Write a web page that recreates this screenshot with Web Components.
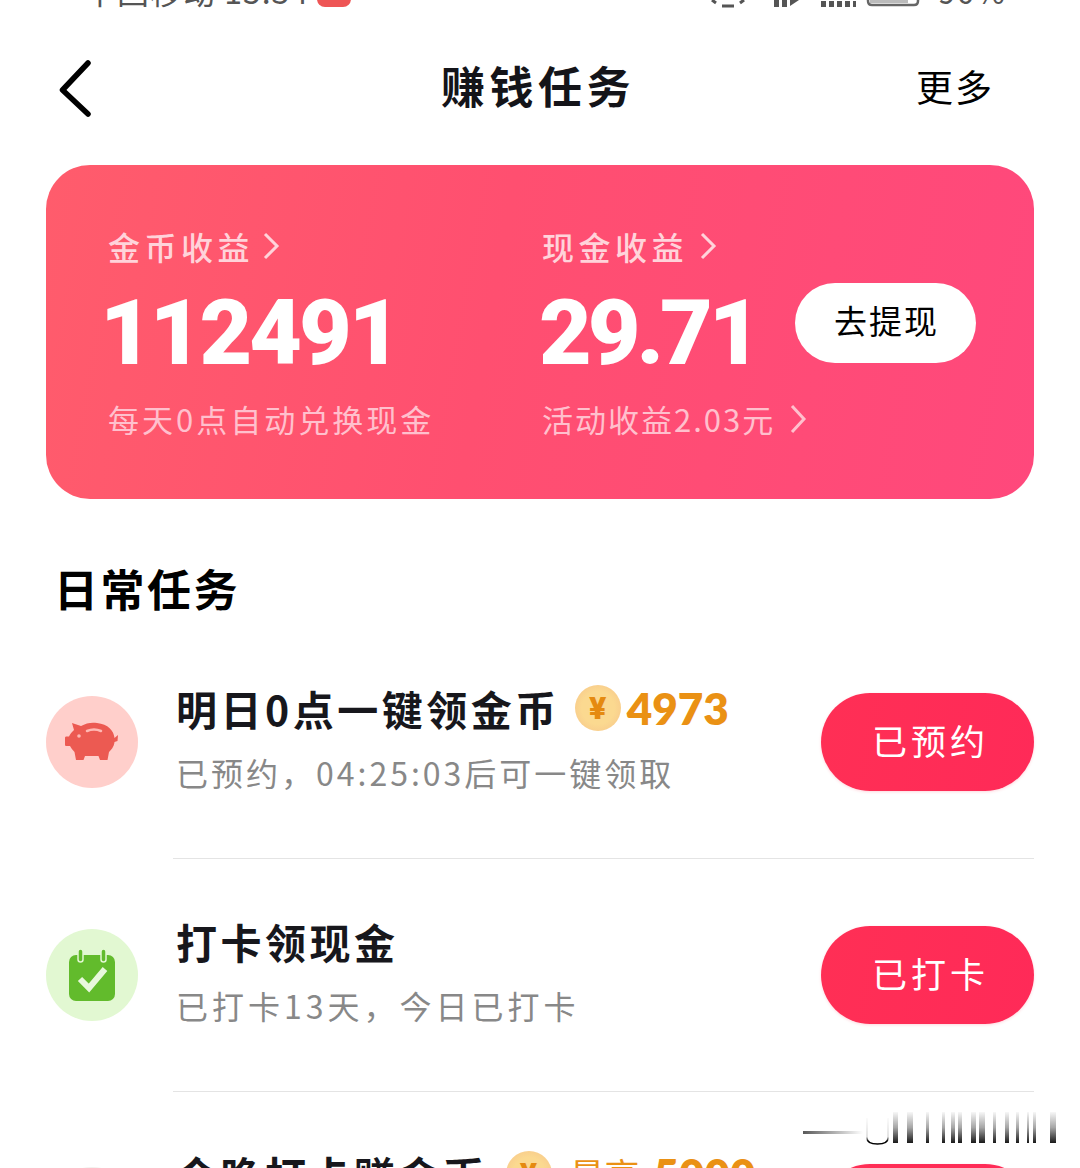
<!DOCTYPE html>
<html><head><meta charset="utf-8">
<style>
html,body{margin:0;padding:0;background:#fff}
body{width:1080px;height:1168px;overflow:hidden;position:relative;font-family:"Noto Sans CJK SC","Noto Sans",sans-serif}
</style></head><body>
<earn-page></earn-page>
<script>
const CJK='"Noto Sans CJK SC","Noto Sans",sans-serif';
class Base extends HTMLElement{
  constructor(){super();this.attachShadow({mode:'open'}).innerHTML=this.markup();}
}
class StatusBar extends Base{markup(){return `<style>
:host{display:flex;justify-content:space-between;height:8px;overflow:hidden;padding:0 74px 0 84px;color:#555;font:400 32px/1 ${CJK};letter-spacing:1px}
.row{display:flex;height:8px}
.t{display:block;margin-top:-26px;white-space:nowrap}
.badge{width:34px;height:30px;background:#ee5555;border-radius:8px;margin:-23px 0 0 8px}
svg{display:block}
</style><div class="row"><span class="t">中国移动 15:34</span><span class="badge"></span></div>
<div class="row"><svg width="210" height="8" viewBox="0 0 210 8" fill="#555"><path d="M2 0 L6 3 M12 6H24 M30 3 L34 0" stroke="#555" stroke-width="3" fill="none"/><rect x="64" y="0" width="5" height="7"/><rect x="72" y="0" width="5" height="7"/><path d="M80 6 L89 0H80Z"/><rect x="111" y="1" width="5" height="6"/><rect x="119" y="1" width="5" height="6"/><rect x="127" y="1" width="5" height="6"/><rect x="135" y="1" width="5" height="6"/><rect x="143" y="1" width="3" height="6"/><path d="M158 -8V1Q158 5 162 5H204Q208 5 208 1V-8" fill="none" stroke="#666" stroke-width="2.500"/><rect x="160" y="0" width="38" height="3" fill="#bbb"/></svg><span class="t" style="margin-left:18px">90%</span></div>`}}
class NavBar extends Base{markup(){return `<style>
:host{display:grid;grid-template-columns:1fr auto 1fr;align-items:center;height:157px;padding:0 62px 0 58px;color:#141419;font-family:${CJK}}
svg{display:block;margin-top:3px}
h1{margin:0 0 4px;font:700 44px/1 ${CJK};letter-spacing:4.500px}
.more{justify-self:end;margin-right:24px;font:400 37px/1 ${CJK};letter-spacing:2px;color:#000}
</style><svg width="36" height="58" viewBox="0 0 36 58"><path d="M30 4 L4.500 31 L30 55" fill="none" stroke="#000" stroke-width="5.500" stroke-linecap="round" stroke-linejoin="round"/></svg>
<h1>赚钱任务</h1><span class="more">更多</span>`}}
class IncomeCol extends Base{markup(){return `<style>
:host{display:block}
.label{display:flex;align-items:center;gap:var(--arrow-gap,8px);margin-top:-1px;font:500 32px/38px ${CJK};letter-spacing:4.500px;color:#ffd3da}
.num{display:flex;align-items:center;gap:var(--pill-gap,38px);margin-top:30px;height:76px}
.value{font:900 91px/76px Roboto,sans-serif;color:#fff;letter-spacing:var(--val-ls,-3px);margin-left:var(--val-x,-8px)}
.sub{display:flex;align-items:center;gap:14px;margin-top:29px;font:400 31px/38px ${CJK};letter-spacing:var(--sub-ls,3px);color:#ffc0cd}
</style><div class="label">${this.getAttribute('label')}<svg width="18" height="28" viewBox="0 0 18 28"><path d="M3 2 15 14 3 26" fill="none" stroke="#ffd3da" stroke-width="3"/></svg></div>
<div class="num"><span class="value">${this.getAttribute('value')}</span><slot></slot></div>
<div class="sub">${this.getAttribute('sub')}${this.hasAttribute('arrow')?'<svg width="18" height="30" viewBox="0 0 18 30"><path d="M3 2 15 15 3 28" fill="none" stroke="#ffc0cd" stroke-width="3"/></svg>':''}</div>`}}
class IncomeCard extends Base{markup(){return `<style>
:host{display:grid;grid-template-columns:434px 1fr;margin:0 46px;height:334px;box-sizing:border-box;padding:63px 58px 0 62px;border-radius:44px;background:linear-gradient(100deg,#ff5c6c 0%,#ff4f70 45%,#ff487c 100%)}
</style><slot></slot>`}}
class PillBtn extends Base{markup(){return `<style>
:host{display:flex;align-items:center;justify-content:center;width:181px;height:80px;margin-top:-20px;padding:0 0 5px 3px;box-sizing:border-box;border-radius:40px;background:#fff;color:#000;font:400 33px/1 ${CJK};letter-spacing:2px}
</style><slot></slot>`}}
class SectionTitle extends Base{markup(){return `<style>
:host{display:block;margin:64px 0 0 54px;font:700 44px/50px ${CJK};letter-spacing:2.500px;color:#000}
</style><slot></slot>`}}
class TaskRow extends Base{markup(){return `<style>
:host{display:grid;grid-template-columns:92px 1fr 213px;align-items:center;column-gap:38px;margin-left:46px;width:988px;height:233px;position:relative}
.icon{width:92px;height:92px;margin-top:var(--side-y,-2px);border-radius:50%;display:flex;align-items:center;justify-content:center;background:var(--ic)}
.text{padding-bottom:10px}
.title{display:flex;align-items:center;font:700 41px/46px ${CJK};letter-spacing:3.500px;color:#17171c;white-space:nowrap}
.sub{margin-top:22px;min-height:38px;font:400 32px/38px ${CJK};letter-spacing:var(--ls,3px);color:#888;white-space:nowrap}
.btn{height:98px;box-sizing:border-box;padding:0 0 5px 6px;margin-top:var(--side-y,-2px);border-radius:49px;display:flex;align-items:center;justify-content:center;background:linear-gradient(100deg,#ff2f55,#ff2a58);color:#fff;font:400 35px/1 ${CJK};letter-spacing:4px;box-shadow:0 1px 3px rgba(255,60,90,.2)}
.line{position:absolute;left:127px;right:0;bottom:0;height:1px;background:#e4e4e4}
</style><div class="icon"><slot name="icon"></slot></div>
<div class="text"><div class="title">${this.getAttribute('heading')}<slot name="reward"></slot></div><div class="sub">${this.getAttribute('sub')||''}</div></div>
<div class="btn">${this.getAttribute('btn')}</div><div class="line"></div>`}}
class CoinReward extends Base{markup(){const p=this.getAttribute('prefix');return `<style>
:host{display:inline-flex;align-items:center;gap:6px;margin-left:15px}
b{font:800 44px/46px Lato,Roboto,sans-serif;color:#ea9114;letter-spacing:0}
i{font:400 35px/46px ${CJK};color:#ea9114;margin:0 8px 0 12px;letter-spacing:0}
.coin{width:46px;height:46px;border-radius:50%;background:radial-gradient(circle at 50% 50%,#fbd990 0 50%,#f9cf8d 72%,#f3bd72 100%);color:#e58a10;font:900 32px/46px Roboto,sans-serif;text-align:center;letter-spacing:0}
</style><span class="coin">¥</span>${p?`<i>${p}</i>`:''}<b>${this.getAttribute('n')}</b>`}}
class EarnPage extends Base{markup(){return `<style>
:host{display:block;width:1080px;height:1168px;overflow:hidden;position:relative}
svg{display:block}
.wm{position:absolute;left:800px;top:1110px}
.gap{height:13px}
</style>
<status-bar></status-bar><nav-bar></nav-bar>
<income-card>
 <income-col label="金币收益" value="112491" sub="每天0点自动兑换现金"></income-col>
 <income-col label="现金收益" value="29.71" sub="活动收益2.03元" arrow style="--val-x:-3px;--val-ls:-4px;--pill-gap:37px;--sub-ls:2px;--arrow-gap:11px"><pill-btn>去提现</pill-btn></income-col>
</income-card>
<section-title>日常任务</section-title>
<div class="gap"></div>
<task-row heading="明日0点一键领金币" sub="已预约，04:25:03后可一键领取" btn="已预约" style="--ic:#ffcfcb">
 <svg slot="icon" width="54" height="40" viewBox="0 0 54 40"><path d="M9 8 L7 1 L16 4 C21 1 27 0 32 1 C43 2 49 9 49.500 16 L53 13 L52.500 19 L49.500 20 C49 25 46 28 44 30 L42.500 38 H35 L33.500 34 H20 L18.500 38 H11 L9.500 30 C7.500 28 6 26 5 24 H1.500 C.5 24 0 23.500 0 22.500 V16 C0 15 .5 14.500 1.500 14.500 H4 C5 12 7 10 9 8 Z" fill="#ec5a52"/><path d="M22 9 Q29 6 36 9" fill="none" stroke="#ffb9b4" stroke-width="2.500" stroke-linecap="round"/><circle cx="14" cy="14" r="1.800" fill="#ffb9b4"/></svg>
 <coin-reward slot="reward" n="4973"></coin-reward>
</task-row>
<task-row heading="打卡领现金" sub="已打卡13天，今日已打卡" btn="已打卡" style="--ic:#e2f8d2;--ls:4px">
 <svg slot="icon" width="46" height="52" viewBox="0 0 46 52"><rect x="0" y="6" width="46" height="46" rx="7" fill="#62bb2c"/><rect x="9" y="0" width="5" height="13" rx="2.500" fill="#62bb2c" stroke="#e2f8d2" stroke-width="1.500"/><rect x="32" y="0" width="5" height="13" rx="2.500" fill="#62bb2c" stroke="#e2f8d2" stroke-width="1.500"/><path d="M11 30 L20 39 L36 20" fill="none" stroke="#e8f8dc" stroke-width="6"/></svg>
</task-row>
<task-row heading="今晚打卡赚金币" btn="" style="--ic:#f3f1ee;--side-y:8px">
 <coin-reward slot="reward" n="5000" prefix="最高" style="margin-left:18px"></coin-reward>
</task-row>
<svg class="wm" width="260" height="38" viewBox="0 0 260 38"><defs><linearGradient id="g" gradientUnits="userSpaceOnUse" x1="0" x2="0" y1="2" y2="33"><stop offset="0" stop-color="#000" stop-opacity=".03"/><stop offset=".5" stop-color="#000" stop-opacity=".35"/><stop offset="1" stop-color="#000" stop-opacity=".9"/></linearGradient><linearGradient id="h" x1="0" x2="1"><stop offset="0" stop-color="#222" stop-opacity=".75"/><stop offset="1" stop-color="#222" stop-opacity="0"/></linearGradient><linearGradient id="u" gradientUnits="userSpaceOnUse" x1="0" x2="0" y1="8" y2="35"><stop offset="0" stop-color="#000" stop-opacity=".02"/><stop offset=".7" stop-color="#000" stop-opacity=".15"/><stop offset=".85" stop-color="#000"/></linearGradient></defs>
<rect x="3" y="21" width="60" height="3" fill="url(#h)"/>
<path d="M67 8V28Q67 34 77.500 34Q88 34 88 28V8" fill="none" stroke="url(#u)" stroke-width="1.500"/>
<g fill="url(#g)"><rect x="93" y="2" width="5" height="31"/><rect x="107" y="2" width="6" height="31"/><rect x="126" y="2" width="3" height="31"/><rect x="142" y="2" width="3" height="31"/><rect x="151" y="2" width="4" height="31"/><rect x="158" y="2" width="4" height="31"/><rect x="171" y="2" width="5" height="31"/><rect x="179" y="2" width="6" height="31"/><rect x="193" y="2" width="3" height="31"/><rect x="205" y="2" width="4" height="31"/><rect x="216" y="2" width="3" height="31"/><rect x="227" y="2" width="2" height="31"/><rect x="233" y="2" width="3" height="31"/><rect x="250" y="2" width="6" height="31"/></g></svg>`}}
customElements.define('status-bar',StatusBar);customElements.define('nav-bar',NavBar);customElements.define('income-col',IncomeCol);customElements.define('income-card',IncomeCard);customElements.define('pill-btn',PillBtn);customElements.define('section-title',SectionTitle);customElements.define('task-row',TaskRow);customElements.define('coin-reward',CoinReward);customElements.define('earn-page',EarnPage);
</script></body></html>
